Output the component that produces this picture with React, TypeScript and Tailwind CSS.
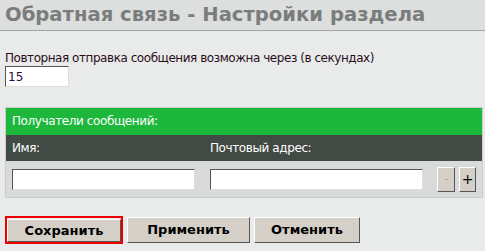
import React from "react";

const inset = "border border-t-[#555] border-l-[#555] border-b-[#ddd] border-r-[#ddd] bg-white";
const outset = "border border-t-white border-l-white border-b-[#555] border-r-[#555] bg-[#d4d0c8]";

const App: React.FC = () => (
    <div className="w-[485px] h-[251px] bg-[#e8ebea] overflow-hidden font-['DejaVu_Sans',sans-serif]">
        <div className="h-[31px] bg-[#dcdfde] border-b border-[#a3a6a5] pl-[5px] pt-[1px]">
            <h1 className="text-[19.6px] leading-[28px] font-bold text-[#7b7d7c] whitespace-nowrap">
                Обратная связь - Настройки раздела
            </h1>
        </div>

        <div className="px-[5px] pt-[20px]">
            <div className="text-[12px] leading-[15px] tracking-[-0.45px] text-[#2a0d1c] whitespace-nowrap">
                Повторная отправка сообщения возможна через (в секундах)
            </div>
            <input
                defaultValue="15"
                className={`${inset} block w-[64px] h-[21px] px-[2px] text-[12px] text-[#2a0d40] outline-none`}
            />

            {/* recipients */}
            <div className="mt-[20px] w-[478px] border border-[#c9cccb] bg-[#d8dbda] text-[12px] tracking-[-0.4px]">
                <div className="h-[27px] bg-[#1db83b] text-white leading-[27px] px-[6px]">
                    Получатели сообщений:
                </div>
                <div className="h-[26px] bg-[#414a44] text-white leading-[26px] flex">
                    <div className="w-[204px] pl-[6px]">Имя:</div>
                    <div>Почтовый адрес:</div>
                </div>
                <div className="h-[36px] flex items-center px-[6px]">
                    <input className={`${inset} w-[184px] h-[21px] outline-none`} />
                    <input className={`${inset} ml-[15px] w-[214px] h-[21px] outline-none`} />
                    <button className={`${outset} ml-[14px] w-[18px] h-[25px] text-[12px] leading-none text-[#aaa]`}>-</button>
                    <button className={`${outset} ml-[4px] w-[17px] h-[25px] text-[14px] leading-none text-black`}>+</button>
                </div>
            </div>

            <div className="mt-[18px] flex gap-[4px]">
                <div className="border-2 border-[#ee0000]">
                    <button className={`${outset} w-[114px] h-[23px] text-[13px] font-bold text-black`}>Сохранить</button>
                </div>
                <button className={`${outset} mt-[1px] w-[123px] h-[26px] text-[13px] font-bold text-black`}>Применить</button>
                <button className={`${outset} mt-[1px] w-[106px] h-[26px] text-[13px] font-bold text-black`}>Отменить</button>
            </div>
        </div>
    </div>
);

export default App;
